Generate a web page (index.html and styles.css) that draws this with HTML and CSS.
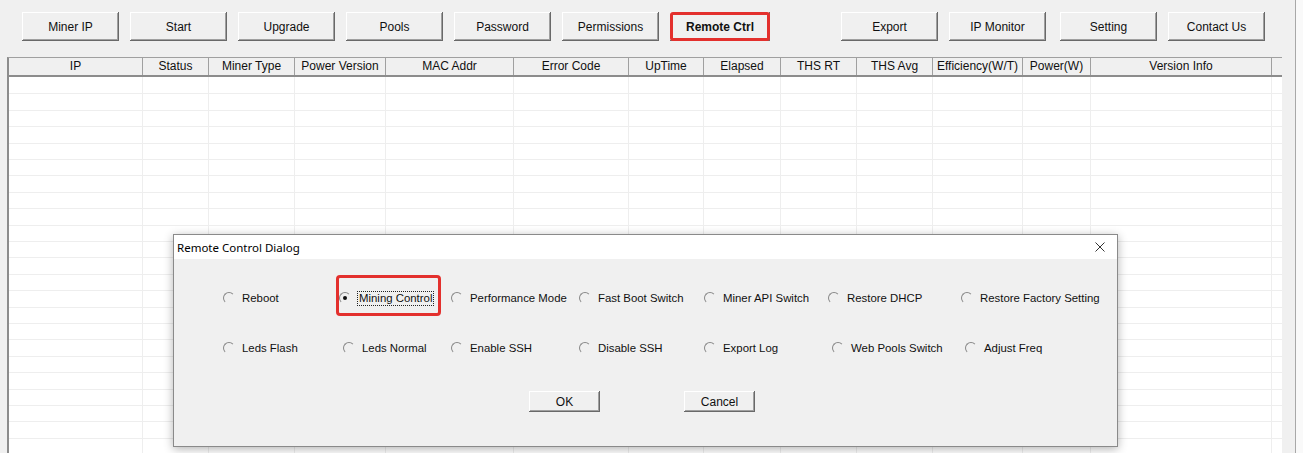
FILE: index.html
```html
<!DOCTYPE html>
<html lang="en">
<head>
    <meta charset="UTF-8">
    <meta name="viewport" content="width=device-width, initial-scale=1.0">
    <title>Miner Tool</title>
    <link rel="stylesheet" href="styles.css">
</head>
<body>
    <div class="app">
        <div class="main">
            <div class="toolbar">
                <button class="btn">Miner IP</button>
                <button class="btn">Start</button>
                <button class="btn">Upgrade</button>
                <button class="btn">Pools</button>
                <button class="btn">Password</button>
                <button class="btn">Permissions</button>
                <button class="btn btn-bold marked">Remote Ctrl</button>
                <button class="btn btn-export">Export</button>
                <button class="btn">IP Monitor</button>
                <button class="btn btn-setting">Setting</button>
                <button class="btn">Contact Us</button>
            </div>

            <div class="table">
                <div class="head cols">
                    <div class="th">IP</div>
                    <div class="th">Status</div>
                    <div class="th">Miner Type</div>
                    <div class="th">Power Version</div>
                    <div class="th">MAC Addr</div>
                    <div class="th">Error Code</div>
                    <div class="th">UpTime</div>
                    <div class="th">Elapsed</div>
                    <div class="th">THS RT</div>
                    <div class="th">THS Avg</div>
                    <div class="th">Efficiency(W/T)</div>
                    <div class="th">Power(W)</div>
                    <div class="th">Version Info</div>
                    <div class="th th-last"></div>
                </div>
                <div class="rows cols">
                    <div class="col"></div>
                    <div class="col"></div>
                    <div class="col"></div>
                    <div class="col"></div>
                    <div class="col"></div>
                    <div class="col"></div>
                    <div class="col"></div>
                    <div class="col"></div>
                    <div class="col"></div>
                    <div class="col"></div>
                    <div class="col"></div>
                    <div class="col"></div>
                    <div class="col"></div>
                    <div class="col col-last"></div>
                </div>
            </div>
        </div>
        <div class="edge"></div>
    </div>

    <div class="dialog">
        <div class="dialog-title">
            <span>Remote Control Dialog</span>
            <svg class="close" width="10" height="10" viewBox="0 0 10 10">
                <path d="M0.5 0.5 L9.5 9.5 M9.5 0.5 L0.5 9.5" stroke="#333" stroke-width="1" fill="none"/>
            </svg>
        </div>
        <div class="dialog-body">
            <div class="options">
                <label class="opt"><span class="radio"></span>Reboot</label>
                <label class="opt marked-opt"><span class="radio checked"></span><span class="focus">Mining Control</span></label>
                <label class="opt"><span class="radio"></span>Performance Mode</label>
                <label class="opt"><span class="radio"></span>Fast Boot Switch</label>
                <label class="opt"><span class="radio"></span>Miner API Switch</label>
                <label class="opt"><span class="radio"></span>Restore DHCP</label>
                <label class="opt"><span class="radio"></span>Restore Factory Setting</label>

                <label class="opt"><span class="radio"></span>Leds Flash</label>
                <label class="opt shift"><span class="radio"></span>Leds Normal</label>
                <label class="opt"><span class="radio"></span>Enable SSH</label>
                <label class="opt"><span class="radio"></span>Disable SSH</label>
                <label class="opt"><span class="radio"></span>Export Log</label>
                <label class="opt shift"><span class="radio"></span>Web Pools Switch</label>
                <label class="opt shift"><span class="radio"></span>Adjust Freq</label>
            </div>
            <div class="dialog-buttons">
                <button class="btn btn-small">OK</button>
                <button class="btn btn-small">Cancel</button>
            </div>
        </div>
    </div>
</body>
</html>
```

FILE: styles.css
```css
body {
    margin: 0;
    padding: 0;
    width: 1303px;
    height: 453px;
    overflow: hidden;
    position: relative;
    background-color: #f0f0f0;
    font-family: "Liberation Sans", Arial, sans-serif;
    font-size: 12px;
    color: #111;
}
.app {
    display: flex;
    height: 453px;
}
.main {
    width: 1295px;
    display: flex;
    flex-direction: column;
}
.edge {
    flex-grow: 1;
    border-left: 1px solid #a8a8a8;
    background-color: #f9f9f9;
}

/* toolbar */
.toolbar {
    display: flex;
    gap: 11px;
    padding: 12px 0 0 22px;
}
.btn {
    width: 97px;
    height: 29px;
    padding: 0;
    border: none;
    background-color: #f0f0f0;
    font-family: "Liberation Sans", Arial, sans-serif;
    font-size: 12px;
    color: #111;
    box-shadow: inset -1px -1px #696969, inset 1px 1px #fff, inset -2px -2px #a0a0a0;
    cursor: pointer;
}
.btn-bold {
    font-weight: bold;
}
.btn-export {
    margin-left: 60px;
}
.btn-setting {
    margin-left: 3px;
}
.marked {
    position: relative;
    width: 100px;
}
.marked::after {
    content: "";
    position: absolute;
    inset: 0;
    border: 3px solid #e3302d;
    border-radius: 3px;
}

/* table */
.table {
    flex-grow: 1;
    margin: 16px 0 0 7px;
    width: 1273px;
    border-top: 1px solid #a0a0a0;
    border-left: 2px solid #8c8c8c;
    display: flex;
    flex-direction: column;
}
.cols {
    display: grid;
    grid-template-columns: 134px 66px 86px 91px 128px 115px 75px 77px 76px 76px 90px 68px 181px 1fr;
}
.head {
    height: 19px;
    box-sizing: border-box;
    border-bottom: 2px solid #8c8c8c;
    background-color: #f0f0f0;
}
.th {
    border-right: 1px solid #a0a0a0;
    text-align: center;
    line-height: 17px;
    white-space: nowrap;
    overflow: hidden;
}
.th-last {
    border-right: none;
}
.rows {
    flex-grow: 1;
    background-color: #fff;
    background-image: repeating-linear-gradient(to bottom, transparent 0, transparent 15.4px, #eeeeee 15.4px, #eeeeee 16.4px);
    background-position: 0 1px;
}
.col {
    border-right: 1px solid #eeeeee;
}
.col-last {
    border-right: none;
}

/* dialog */
.dialog {
    position: absolute;
    left: 173px;
    top: 234px;
    width: 945px;
    height: 213px;
    box-sizing: border-box;
    border: 1px solid #8a8a8a;
    background-color: #f0f0f0;
    box-shadow: 0 2px 9px rgba(0, 0, 0, 0.3);
    display: flex;
    flex-direction: column;
}
.dialog-title {
    height: 24px;
    background-color: #fff;
    display: flex;
    align-items: center;
    justify-content: space-between;
    padding: 0 12px 0 3px;
    font-family: "Noto Sans", "Open Sans", sans-serif;
    font-size: 11.5px;
    color: #000;
}
.close {
    display: block;
}
.dialog-body {
    padding: 31px 0 0 48px;
}
.options {
    display: grid;
    grid-template-columns: 116px 112px 128px 125px 124px 133px auto;
    grid-auto-rows: 16px;
    row-gap: 34px;
    font-size: 11.4px;
}
.opt {
    display: flex;
    align-items: center;
    justify-self: start;
    white-space: nowrap;
    color: #111;
}
.shift {
    padding-left: 4px;
}
.radio {
    width: 10px;
    height: 10px;
    border-radius: 50%;
    border: 1px solid #888;
    border-color: #888 transparent transparent #888;
    margin: 0 7px 0 1px;
    position: relative;
    flex-shrink: 0;
}
.radio.checked::after {
    content: "";
    position: absolute;
    left: 3px;
    top: 3px;
    width: 4px;
    height: 4px;
    border-radius: 50%;
    background-color: #111;
}
.focus {
    outline: 1px dotted #222;
    padding: 0 1px;
    line-height: 13px;
}
.marked-opt {
    position: relative;
}
.marked-opt::after {
    content: "";
    position: absolute;
    left: -2px;
    right: -8px;
    top: -15px;
    bottom: -10px;
    border: 3px solid #e3302d;
    border-radius: 4px;
}
.dialog-buttons {
    display: flex;
    gap: 84px;
    padding-left: 307px;
    margin-top: 35px;
}
.btn-small {
    width: 71px;
    height: 21px;
}
```
